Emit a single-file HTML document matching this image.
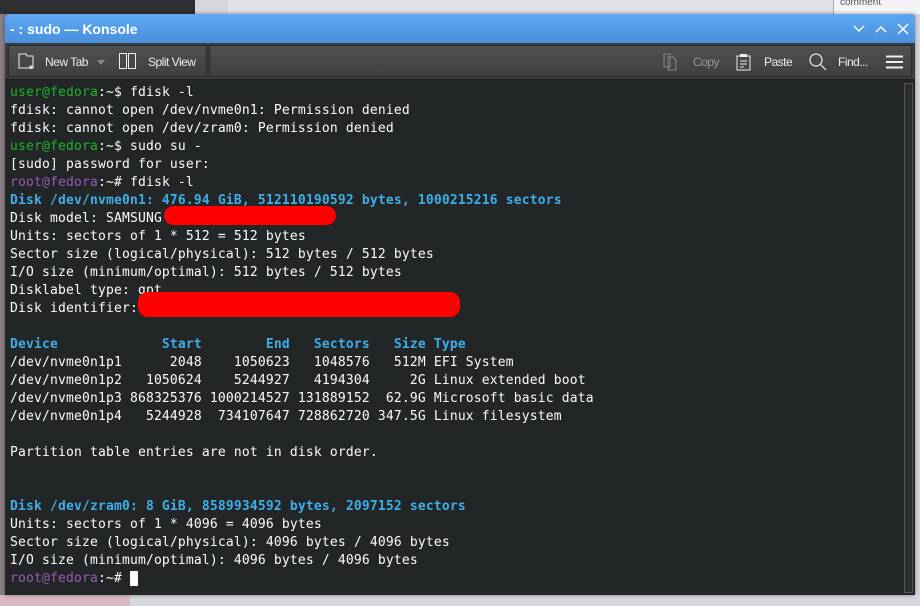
<!DOCTYPE html>
<html><head><style>
*{margin:0;padding:0;box-sizing:border-box}
body{width:920px;height:606px;overflow:hidden;background:#d6d6de;position:relative;font-family:"Liberation Sans",sans-serif}
.bgtl{position:absolute;left:0;top:0;width:195px;height:14px;background:#2e2f31}
.bgl{position:absolute;left:0;top:14px;width:8px;height:592px;background:#8a7f84}
.bgpk{position:absolute;left:0;top:595px;width:130px;height:11px;background:#d9b9c6}
.bgr{position:absolute;left:228px;top:0;width:610px;height:14px;background:#e0e0e8}
.bgrr{position:absolute;left:833px;top:0;width:87px;height:14px;background:#f4f4f6;border-left:1px solid #aaa;font-size:10px;color:#555;padding-left:6px;line-height:6px}
.win{position:absolute;left:5px;top:14px;width:910px;height:581px;background:#232627;border-radius:4px 4px 0 0;overflow:hidden;box-shadow:0 0 4px rgba(0,0,0,.4)}
.title{height:29px;background:linear-gradient(#5da8f3,#4a90dc);color:#fff;font-weight:bold;font-size:14px;line-height:31px;padding-left:5px}
.tb{height:37px;background:#3a3c3e;position:relative;border-bottom:1px solid #1e1f20}
.grp{position:absolute;top:2px;height:32px;background:linear-gradient(#4e5052,#3e4042);border:1px solid #2a2b2c}
.tb span{position:absolute;top:12px;font-size:12px;color:#eee;letter-spacing:-.5px}
.term{position:absolute;left:0;top:70px;right:12px;font-family:"DejaVu Sans Mono",monospace;font-size:13px;letter-spacing:.17px;line-height:18px;color:#fcfcfc;padding-left:5px;white-space:pre}
.g{color:#1cb32a}.b{color:#3daee9;font-weight:bold}.p{color:#9b59b6}
.sb{position:absolute;right:2px;top:69px;width:9px;height:510px;background:#2b2e30;border:1px solid #555}
.scr{position:absolute;background:#f00;border-radius:10px}
</style></head><body>
<div class="bgtl"></div><div class="bgr"></div><div class="bgrr">comment</div><div class="bgl"></div><div class="bgpk"></div>
<div class="win">
<div class="title">- : sudo — Konsole
<svg style="position:absolute;right:50px;top:11px" width="12" height="8"><path d="M1 1l5 5 5-5" stroke="#fff" fill="none" stroke-width="1.4"/></svg>
<svg style="position:absolute;right:28px;top:11px" width="12" height="8"><path d="M1 7l5-5 5 5" stroke="#fff" fill="none" stroke-width="1.4"/></svg>
<svg style="position:absolute;right:6px;top:9px" width="12" height="12"><path d="M1 1l10 10M11 1L1 11" stroke="#fff" stroke-width="1.4"/></svg>
</div>
<div class="tb">
<div class="grp" style="left:3px;width:199px"></div>
<div class="grp" style="left:204px;width:703px"></div>
<svg style="position:absolute;left:13px;top:10px" width="18" height="17"><path d="M1 1h7l1 2h6v12H1z" stroke="#eee" fill="none"/><path d="M13 12v4M11 14h4" stroke="#eee"/></svg>
<span style="left:40px">New Tab</span>
<svg style="position:absolute;left:92px;top:17px" width="8" height="5"><path d="M0 0h8L4 5z" fill="#888"/></svg>
<svg style="position:absolute;left:114px;top:10px" width="18" height="17"><rect x=".5" y=".5" width="7" height="15" stroke="#eee" fill="none"/><rect x="9.5" y=".5" width="7" height="15" stroke="#eee" fill="none"/></svg>
<span style="left:143px">Split View</span>
<svg style="position:absolute;left:658px;top:10px" width="16" height="18"><path d="M1 1h6v13H1zM5 4h5l3 3v10H5z" stroke="#888" fill="none"/></svg>
<span style="left:688px;color:#999">Copy</span>
<svg style="position:absolute;left:731px;top:10px" width="16" height="18"><path d="M1 3h13v14H1z" stroke="#eee" fill="none"/><rect x="4" y="1" width="7" height="3" fill="#eee"/><path d="M4 8h7M4 11h7M4 14h4" stroke="#eee"/></svg>
<span style="left:759px">Paste</span>
<svg style="position:absolute;left:804px;top:10px" width="18" height="18"><circle cx="7" cy="7" r="6" stroke="#eee" fill="none" stroke-width="1.2"/><path d="M11 11l6 6" stroke="#eee" stroke-width="1.2"/></svg>
<span style="left:833px">Find...</span>
<svg style="position:absolute;left:881px;top:12px" width="18" height="14"><path d="M0 1.5h17M0 7h17M0 12.5h17" stroke="#eee" stroke-width="2"/></svg>
</div>
<div class="term"><span class="g">user@fedora</span>:~$ fdisk -l
fdisk: cannot open /dev/nvme0n1: Permission denied
fdisk: cannot open /dev/zram0: Permission denied
<span class="g">user@fedora</span>:~$ sudo su -
[sudo] password for user:
<span class="p">root@fedora</span>:~# fdisk -l
<span class="b">Disk /dev/nvme0n1: 476.94 GiB, 512110190592 bytes, 1000215216 sectors</span>
Disk model: SAMSUNG
Units: sectors of 1 * 512 = 512 bytes
Sector size (logical/physical): 512 bytes / 512 bytes
I/O size (minimum/optimal): 512 bytes / 512 bytes
Disklabel type: gpt
Disk identifier:

<span class="b">Device             Start        End   Sectors   Size Type</span>
/dev/nvme0n1p1      2048    1050623   1048576   512M EFI System
/dev/nvme0n1p2   1050624    5244927   4194304     2G Linux extended boot
/dev/nvme0n1p3 868325376 1000214527 131889152  62.9G Microsoft basic data
/dev/nvme0n1p4   5244928  734107647 728862720 347.5G Linux filesystem

Partition table entries are not in disk order.


<span class="b">Disk /dev/zram0: 8 GiB, 8589934592 bytes, 2097152 sectors</span>
Units: sectors of 1 * 4096 = 4096 bytes
Sector size (logical/physical): 4096 bytes / 4096 bytes
I/O size (minimum/optimal): 4096 bytes / 4096 bytes
<span class="p">root@fedora</span>:~# <span style="background:#fcfcfc"> </span></div>
<div class="scr" style="left:159px;top:192px;width:172px;height:19px"></div>
<div class="scr" style="left:133px;top:278px;width:322px;height:25px"></div>
<div class="sb"></div>
</div>
</body></html>
